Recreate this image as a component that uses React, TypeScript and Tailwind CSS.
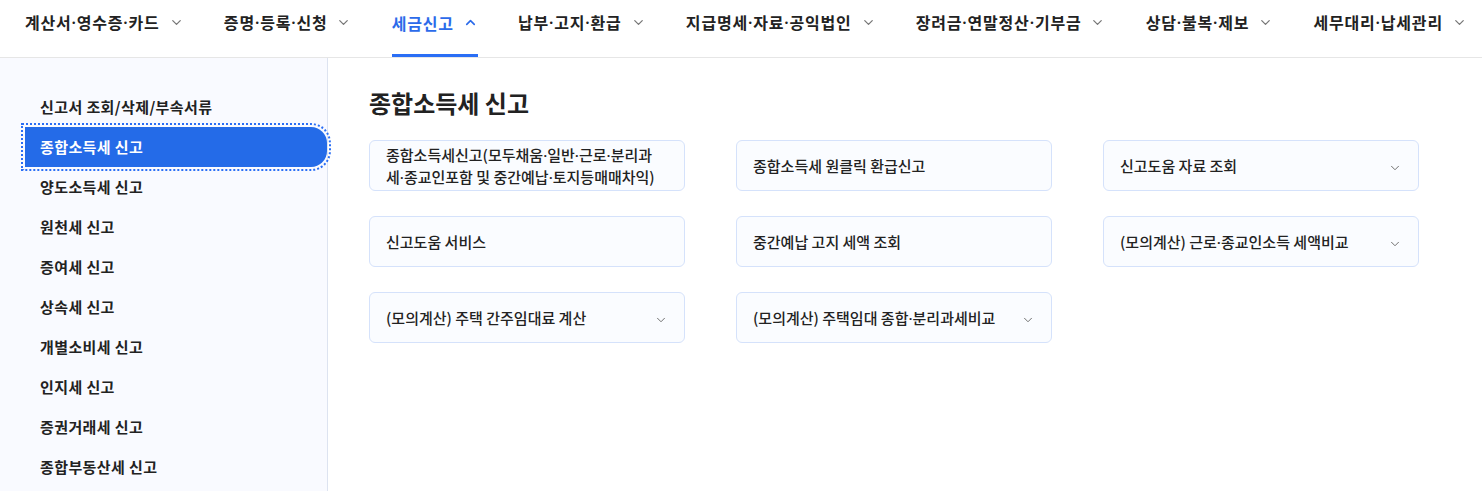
import { Fragment } from "react";
import { ChevronDown, ChevronUp } from "lucide-react";

const navItems = [
  "계산서·영수증·카드",
  "증명·등록·신청",
  "세금신고",
  "납부·고지·환급",
  "지급명세·자료·공익법인",
  "장려금·연말정산·기부금",
  "상담·불복·제보",
  "세무대리·납세관리",
];

const sideItems = [
  "신고서 조회/삭제/부속서류",
  "종합소득세 신고",
  "양도소득세 신고",
  "원천세 신고",
  "증여세 신고",
  "상속세 신고",
  "개별소비세 신고",
  "인지세 신고",
  "증권거래세 신고",
  "종합부동산세 신고",
];

const cards: { label: string[]; more?: boolean }[] = [
  { label: ["종합소득세신고(모두채움·일반·근로·분리과", "세·종교인포함 및 중간예납·토지등매매차익)"] },
  { label: ["종합소득세 원클릭 환급신고"] },
  { label: ["신고도움 자료 조회"], more: true },
  { label: ["신고도움 서비스"] },
  { label: ["중간예납 고지 세액 조회"] },
  { label: ["(모의계산) 근로·종교인소득 세액비교"], more: true },
  { label: ["(모의계산) 주택 간주임대료 계산"], more: true },
  { label: ["(모의계산) 주택임대 종합·분리과세비교"], more: true },
];

// the CJK font sets "·" full width; keep it narrow like the original
function Txt({ t }: { t: string }) {
  const parts = t.split("·");
  return (
    <>
      {parts.map((p, i) => (
        <Fragment key={i}>
          {i > 0 ? <span style={{ fontFamily: '"Noto Sans", sans-serif' }}>·</span> : null}
          {p}
        </Fragment>
      ))}
    </>
  );
}

export default function App() {
  const active = "세금신고";
  return (
    <div
      className="w-[1482px] h-[491px] overflow-hidden bg-white text-[#222]"
      style={{ fontFamily: '"Noto Sans CJK KR", "Noto Sans", sans-serif' }}>
      {/* top menu */}
      <nav className="h-[58px] border-b border-[#e6e6e6] flex justify-between pl-[25px] pr-[15px] whitespace-nowrap">
        {navItems.map((n) => {
          const on = n === active;
          return (
            <div
              key={n}
              className={`relative shrink-0 flex items-center gap-[9px] pb-[17px] pt-[5px] text-[16px] font-semibold ${
                on ? "text-[#2c6bea]" : "text-[#222]"
              }`}>
              <span className="tracking-[0.8px]">
                <Txt t={n} />
              </span>
              {on ? (
                <ChevronUp size={15} strokeWidth={2.6} className="text-[#2c6bea] shrink-0" />
              ) : (
                <ChevronDown size={15} strokeWidth={2} className="text-[#777] shrink-0" />
              )}
              {on ? <div className="absolute left-0 right-0 bottom-0 h-[3px] bg-[#2a6ef5]" /> : null}
            </div>
          );
        })}
      </nav>

      <div className="flex h-[433px]">
        {/* left menu */}
        <aside className="w-[328px] shrink-0 bg-[#f9faff] border-r border-[#dde3f0] pl-[25px] pt-[29px]">
          {sideItems.map((s, i) =>
            i === 1 ? (
              <div
                key={s}
                className="h-[40px] flex items-center pl-[15px] bg-[#246be8] text-white font-bold text-[15px] tracking-[0.4px] rounded-r-[16px] outline-2 outline-dotted outline-[#2a6ef5] outline-offset-[2px]">
                {s}
              </div>
            ) : (
              <div
                key={s}
                className="h-[40px] flex items-center pl-[15px] text-[15px] font-semibold tracking-[0.4px] text-[#222]">
                {s}
              </div>
            ),
          )}
        </aside>

        {/* content */}
        <main className="flex-1 pl-[41px] pt-[29px]">
          <h2 className="text-[24px] font-bold leading-[32px] text-[#222] mb-[21px]">종합소득세 신고</h2>
          <div className="grid grid-cols-[316px_316px_316px] gap-x-[51px] gap-y-[25px]">
            {cards.map((c) => (
              <div
                key={c.label.join("")}
                className="h-[51px] flex items-center justify-between rounded-[6px] border border-[#d5e2fb] bg-[#fafcff] pl-[16px] pr-[16px]">
                <div className="text-[15px] font-medium leading-[21px] text-[#222]">
                  {c.label.map((l) => (
                    <div key={l}>
                      <Txt t={l} />
                    </div>
                  ))}
                </div>
                {c.more ? <ChevronDown size={14} strokeWidth={1.6} className="text-[#666] shrink-0 mt-[4px]" /> : null}
              </div>
            ))}
          </div>
        </main>
      </div>
    </div>
  );
}
